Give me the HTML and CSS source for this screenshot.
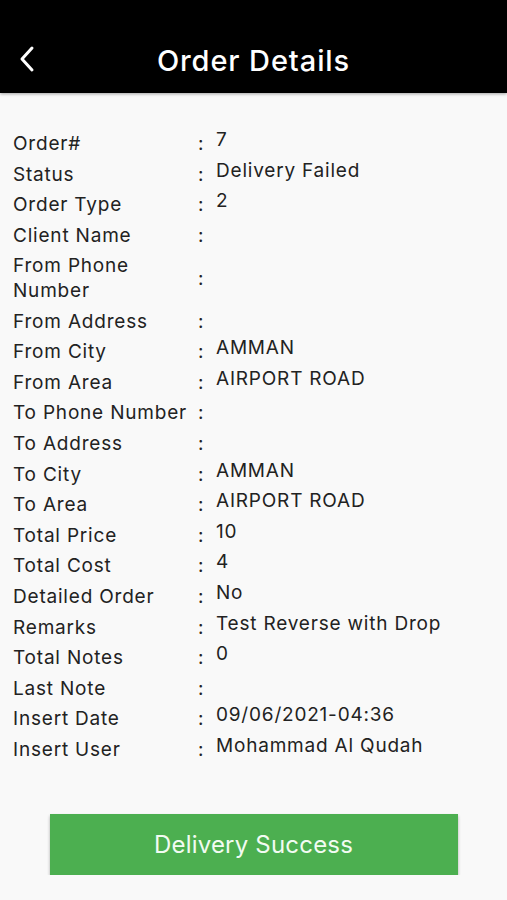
FILE: index.html
```html
<!DOCTYPE html>
<html lang="en">
<head>
  <meta charset="UTF-8" />
  <meta name="viewport" content="width=device-width, initial-scale=1.0"/>
  <title>Order Details</title>
  <link rel="stylesheet" href="styles.css">
</head>
<body>
  <header class="topbar">
    <span class="back">
      <svg width="18" height="28" viewBox="0 0 18 28"><path d="M14 3 L4 14 L14 25" fill="none" stroke="#fff" stroke-width="3" stroke-linecap="round" stroke-linejoin="round"/></svg>
    </span>
    <h1>Order Details</h1>
  </header>

  <div class="details">
    <div class="row"><span class="label">Order#</span><span class="colon">:</span><span class="value">7</span></div>
    <div class="row"><span class="label">Status</span><span class="colon">:</span><span class="value">Delivery Failed</span></div>
    <div class="row"><span class="label">Order Type</span><span class="colon">:</span><span class="value">2</span></div>
    <div class="row"><span class="label">Client Name</span><span class="colon">:</span><span class="value"></span></div>
    <div class="row"><span class="label">From Phone Number</span><span class="colon">:</span><span class="value"></span></div>
    <div class="row"><span class="label">From Address</span><span class="colon">:</span><span class="value"></span></div>
    <div class="row"><span class="label">From City</span><span class="colon">:</span><span class="value">AMMAN</span></div>
    <div class="row"><span class="label">From Area</span><span class="colon">:</span><span class="value">AIRPORT ROAD</span></div>
    <div class="row"><span class="label">To Phone Number</span><span class="colon">:</span><span class="value"></span></div>
    <div class="row"><span class="label">To Address</span><span class="colon">:</span><span class="value"></span></div>
    <div class="row"><span class="label">To City</span><span class="colon">:</span><span class="value">AMMAN</span></div>
    <div class="row"><span class="label">To Area</span><span class="colon">:</span><span class="value">AIRPORT ROAD</span></div>
    <div class="row"><span class="label">Total Price</span><span class="colon">:</span><span class="value">10</span></div>
    <div class="row"><span class="label">Total Cost</span><span class="colon">:</span><span class="value">4</span></div>
    <div class="row"><span class="label">Detailed Order</span><span class="colon">:</span><span class="value">No</span></div>
    <div class="row"><span class="label">Remarks</span><span class="colon">:</span><span class="value">Test Reverse with Drop</span></div>
    <div class="row"><span class="label">Total Notes</span><span class="colon">:</span><span class="value">0</span></div>
    <div class="row"><span class="label">Last Note</span><span class="colon">:</span><span class="value"></span></div>
    <div class="row"><span class="label">Insert Date</span><span class="colon">:</span><span class="value">09/06/2021-04:36</span></div>
    <div class="row"><span class="label">Insert User</span><span class="colon">:</span><span class="value">Mohammad Al Qudah</span></div>
  </div>

  <div class="actions">
    <button class="success">Delivery Success</button>
  </div>
</body>
</html>
```

FILE: styles.css
```css
body {
  margin: 0;
  font-family: 'Inter', 'Roboto', sans-serif;
  background: #f9f9f9;
  color: #222222;
}

.topbar {
  height: 93px;
  background: #000000;
  display: flex;
  align-items: flex-end;
  justify-content: center;
  position: relative;
  box-shadow: 0 1px 3px rgba(0, 0, 0, 0.35);
}

.topbar h1 {
  margin: 0 0 15px;
  color: #ffffff;
  font-size: 29px;
  font-weight: 500;
  letter-spacing: 0.9px;
}

.back {
  position: absolute;
  left: 18px;
  bottom: 20px;
  display: flex;
}

.details {
  padding: 36px 13px 0;
}

.row {
  display: grid;
  grid-template-columns: 184px 19px 1fr;
  align-items: center;
  padding: 3px 0;
  font-size: 19px;
  line-height: 24.6px;
  letter-spacing: 0.8px;
}

.colon {
  padding-left: 1px;
}

.value {
  align-self: start;
  margin-top: -4px;
}

.actions {
  display: flex;
  justify-content: center;
  padding-top: 49px;
}

.success {
  width: 408px;
  height: 61px;
  border: none;
  border-radius: 0;
  background: #4caf50;
  color: #f2fbf2;
  font-family: 'Inter', 'Roboto', sans-serif;
  font-size: 24px;
  letter-spacing: 0.2px;
  box-shadow: 0 2px 3px rgba(0, 0, 0, 0.3);
}
```
